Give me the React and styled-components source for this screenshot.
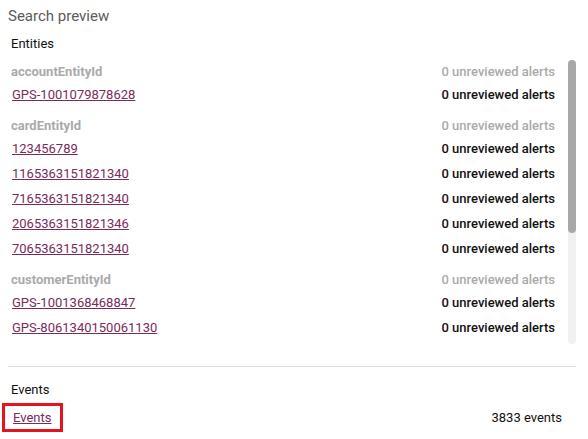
import React from 'react';
import styled, { createGlobalStyle } from 'styled-components';

const GlobalStyle = createGlobalStyle`
  body {
    margin: 0;
    background: #fff;
    font-family: Roboto, "Liberation Sans", sans-serif;
  }
`;

const Panel = styled.div`
  width: 588px;
  height: 439px;
  box-sizing: border-box;
  padding: 4px 12px 0 8px;
  display: flex;
  flex-direction: column;
  overflow: hidden;
`;

const Title = styled.h2`
  margin: 0;
  font-size: 15px;
  font-weight: 400;
  line-height: 24px;
  color: #5b5b5b;
`;

const SectionLabel = styled.div`
  font-size: 13px;
  color: #111;
  line-height: 20px;
  padding-left: 3px;
  margin-top: ${(p) => p.top || 0}px;
`;

const ScrollFrame = styled.div`
  margin-top: 3px;
  height: 287px;
  display: flex;
  gap: 13px;
`;

const List = styled.div`
  flex: 1;
  overflow: hidden;
  padding: 2px 0 0 3px;
`;

const Track = styled.div`
  width: 8px;
  margin-top: 3px;
  background: #f1f1f1;
  border-radius: 4px;
  display: flex;
  flex-direction: column;
`;

const Thumb = styled.div`
  height: ${(p) => p.size}px;
  background: #a8a8a8;
  border-radius: 4px;
`;

const Group = styled.div`
  & + & {
    margin-top: 6px;
  }
`;

const Row = styled.div`
  display: flex;
  justify-content: space-between;
  align-items: center;
  box-sizing: border-box;
  height: ${(p) => (p.header ? 23 : 25)}px;
  padding-top: ${(p) => (p.header ? 2 : 0)}px;
  font-size: 13px;
`;

const GroupName = styled.span`
  font-weight: 700;
  color: #aaaaaa;
`;

const Count = styled.span`
  font-weight: 500;
  color: ${(p) => (p.muted ? '#aaaaaa' : '#111')};
`;

const EntityLink = styled.a`
  color: #7b2a5c;
  text-decoration: underline;
  padding-left: 1px;
  cursor: pointer;
`;

const Divider = styled.hr`
  border: none;
  border-top: 1px solid #e0e0e0;
  margin: 22px 0 0 0;
`;

const EventsRow = styled.div`
  display: flex;
  justify-content: space-between;
  align-items: center;
  margin-top: 3px;
  padding-right: 14px;
  font-size: 13px;
`;

const Highlight = styled.div`
  margin-left: -6px;
  border: 3px solid #e5131c;
  padding: 4px 9px 4px 7px;
  line-height: 15px;
`;

const EventCount = styled.span`
  color: #111;
  font-weight: 400;
`;

const groups = [
  { name: 'accountEntityId', items: ['GPS-1001079878628'] },
  {
    name: 'cardEntityId',
    items: ['123456789', '1165363151821340', '7165363151821340', '2065363151821346', '7065363151821340'],
  },
  {
    name: 'customerEntityId',
    items: ['GPS-1001368468847', 'GPS-8061340150061130'],
  },
];

export default function App() {
  return (
    <>
      <GlobalStyle />
      <Panel>
        <Title>Search preview</Title>
        <SectionLabel top={6}>Entities</SectionLabel>
        <ScrollFrame>
          <List>
            {groups.map((g) => (
              <Group key={g.name}>
                <Row header>
                  <GroupName>{g.name}</GroupName>
                  <Count muted>0 unreviewed alerts</Count>
                </Row>
                {g.items.map((id) => (
                  <Row key={id}>
                    <EntityLink>{id}</EntityLink>
                    <Count>0 unreviewed alerts</Count>
                  </Row>
                ))}
              </Group>
            ))}
          </List>
          <Track>
            <Thumb size={173} />
          </Track>
        </ScrollFrame>
        <Divider />
        <SectionLabel top={13}>Events</SectionLabel>
        <EventsRow>
          <Highlight>
            <EntityLink>Events</EntityLink>
          </Highlight>
          <EventCount>3833 events</EventCount>
        </EventsRow>
      </Panel>
    </>
  );
}
